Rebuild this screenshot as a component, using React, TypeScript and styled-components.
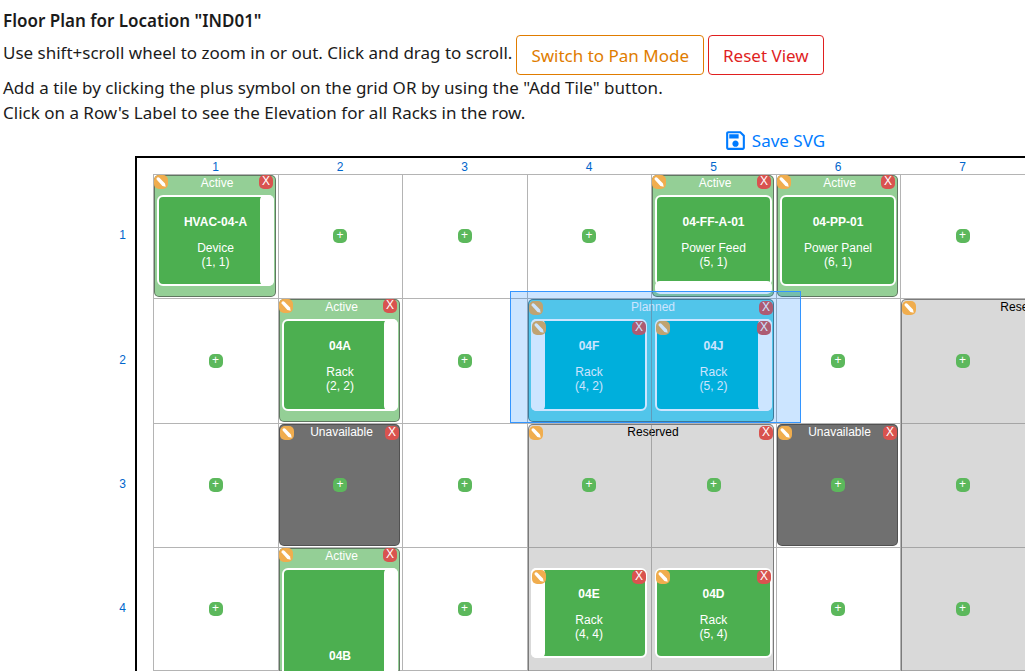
import React from "react";
import styled, { createGlobalStyle, css } from "styled-components";

const GlobalStyle = createGlobalStyle`
  *, *::before, *::after { box-sizing: border-box; }
  body {
    margin: 0;
    background: #fff;
    color: #1b1b1b;
    font: 17px/25px "Noto Sans", sans-serif;
  }
`;

const planFont = css`
  font: 12px/14px "Liberation Sans", Arial, sans-serif;
`;

const Page = styled.main`
  display: flex;
  flex-direction: column;
  height: 100vh;
  overflow: hidden;
`;

const Intro = styled.header`
  padding: 8px 3px 0;
  white-space: nowrap;
`;

const Title = styled.h1`
  margin: 0;
  font-size: 17px;
  line-height: 25px;
  font-weight: 600;
`;

const ModeRow = styled.div`
  display: flex;
  align-items: center;
  gap: 4px;
  padding-top: 2px;
`;

const Text = styled.p`
  margin: 0;
`;

const ModeHint = styled(Text)`
  padding-bottom: 5px;
`;

const OutlineButton = styled.button<{ $color: string }>`
  height: 40px;
  padding: 0 14px;
  border: 1px solid ${(p) => p.$color};
  border-radius: 4px;
  background: #fff;
  color: ${(p) => p.$color};
  font: inherit;
  cursor: pointer;
`;

const Canvas = styled.section`
  width: 1548px;
  flex: 1;
  display: flex;
  flex-direction: column;
`;

const SaveLink = styled.a`
  display: flex;
  align-self: center;
  align-items: center;
  gap: 4px;
  margin: 3px 0;
  color: #007bff;
  text-decoration: none;
`;

const Plan = styled.div`
  display: flex;
  flex: 1;
  ${planFont}
`;

const rows = "124px 125px 124px 123px 124px";
const columns = "repeat(4, 125px 124px)";

const RowLabels = styled.nav`
  display: grid;
  grid-template-rows: ${rows};
  width: 135px;
  padding: 17px 9px 0 0;
  justify-content: end;
  align-items: center;
`;

const Board = styled.div`
  flex: 1;
  padding-left: 16px;
  border: solid #000;
  border-width: 2px 0 0 2px;
`;

const ColumnLabels = styled.nav`
  display: grid;
  grid-template-columns: ${columns};
  justify-items: center;
  height: 16px;
  padding-top: 2px;
`;

const AxisLink = styled.a`
  color: #0066cc;
  text-decoration: none;
`;

const Grid = styled.div`
  position: relative;
  display: grid;
  grid-template-columns: ${columns};
  grid-template-rows: ${rows};
`;

type Span = { $c: number; $r: number; $w?: number; $h?: number };

const area = css<Span>`
  grid-column: ${(p) => p.$c} / span ${(p) => p.$w ?? 1};
  grid-row: ${(p) => p.$r} / span ${(p) => p.$h ?? 1};
`;

const Cell = styled.div<Span>`
  ${area}
  display: flex;
  align-items: center;
  justify-content: center;
  padding: 0 1px 1px 0;
  border: solid rgba(130, 130, 130, 0.6);
  border-width: 1px 0 0 1px;
`;

const Status = styled.div<Span & { $bg: string; $fg: string }>`
  ${area}
  margin: 1px 2px 1px 1px;
  padding-left: 4px;
  border: 1px solid rgba(60, 60, 60, 0.6);
  border-radius: 5px;
  background: ${(p) => p.$bg};
  color: ${(p) => p.$fg};
  text-align: center;
`;

const TileControls = styled.div<Span>`
  ${area}
  position: relative;
  align-self: start;
  height: 20px;
`;

const Item = styled.div<Span & { $bg: string }>`
  ${area}
  position: relative;
  display: flex;
  flex-direction: column;
  align-items: center;
  justify-content: center;
  margin: 21px 4px 12px;
  padding-top: 2px;
  border: 2px solid #fff;
  border-radius: 6px;
  background: ${(p) => p.$bg};
  color: #fff;
`;

const ItemName = styled.strong`
  margin-bottom: 12px;
`;

const Facing = styled.span<{ $side: Side }>`
  position: absolute;
  border-radius: 5px;
  background: #fff;
  ${(p) =>
    p.$side === "down"
      ? "left: -2px; right: -2px; bottom: -10px; height: 13px;"
      : `top: -2px; bottom: -2px; width: 14px; ${p.$side}: -2px;`}
`;

const badge = css`
  display: flex;
  align-items: flex-start;
  justify-content: center;
  width: 14px;
  height: 14px;
  padding: 0;
  border: 0;
  border-radius: 5px;
  color: #fff;
  font: 12px/12px "Liberation Sans", Arial, sans-serif;
  cursor: pointer;
`;

const AddButton = styled.button`
  ${badge}
  background: #5cb85c;
`;

const EditButton = styled.button<{ $x: number; $y: number }>`
  ${badge}
  position: absolute;
  left: ${(p) => p.$x}px;
  top: ${(p) => p.$y}px;
  background: #f0ad4e;
`;

const DeleteButton = styled.button<{ $x: number; $y: number }>`
  ${badge}
  position: absolute;
  right: ${(p) => p.$x}px;
  top: ${(p) => p.$y}px;
  background: #d9534f;
`;

const Selection = styled.div`
  position: absolute;
  left: 357px;
  top: 117px;
  width: 291px;
  height: 132px;
  border: 1px solid #3395ff;
  background: rgba(0, 123, 255, 0.2);
  pointer-events: none;
`;

type Side = "left" | "right" | "down";

const kinds = {
  Active: { bg: "#94cf96", fg: "#fff" },
  Planned: { bg: "#66d7e5", fg: "#fff" },
  Reserved: { bg: "#d9d9d9", fg: "#000" },
  Unavailable: { bg: "#707070", fg: "#fff" },
};

type Kind = keyof typeof kinds;

const statuses: { kind: Kind; c: number; r: number; w?: number; h?: number }[] = [
  { kind: "Active", c: 1, r: 1 },
  { kind: "Active", c: 5, r: 1 },
  { kind: "Active", c: 6, r: 1 },
  { kind: "Active", c: 2, r: 2 },
  { kind: "Planned", c: 4, r: 2, w: 2 },
  { kind: "Reserved", c: 7, r: 2, w: 2, h: 4 },
  { kind: "Unavailable", c: 2, r: 3 },
  { kind: "Reserved", c: 4, r: 3, w: 2, h: 3 },
  { kind: "Unavailable", c: 6, r: 3 },
  { kind: "Active", c: 2, r: 4, h: 2 },
];

type ItemData = {
  name: string;
  type: string;
  c: number;
  r: number;
  h?: number;
  side?: Side;
  grouped?: boolean;
  planned?: boolean;
};

const items: ItemData[] = [
  { name: "HVAC-04-A", type: "Device", c: 1, r: 1, side: "right" },
  { name: "04-FF-A-01", type: "Power Feed", c: 5, r: 1, side: "down" },
  { name: "04-PP-01", type: "Power Panel", c: 6, r: 1 },
  { name: "04A", type: "Rack", c: 2, r: 2, side: "right" },
  { name: "04F", type: "Rack", c: 4, r: 2, side: "left", grouped: true, planned: true },
  { name: "04J", type: "Rack", c: 5, r: 2, side: "right", grouped: true, planned: true },
  { name: "04B", type: "Rack", c: 2, r: 4, h: 2, side: "right" },
  { name: "04E", type: "Rack", c: 4, r: 4, side: "left", grouped: true },
  { name: "04D", type: "Rack", c: 5, r: 4, grouped: true },
];

// Labelled, editable part of the floor; the ruled lines run one cell further.
const columnNumbers = [1, 2, 3, 4, 5, 6, 7];
const rowNumbers = [1, 2, 3, 4];
const ruledColumns = [...columnNumbers, 8];
const ruledRows = [...rowNumbers, 5];

const canAdd = (c: number, r: number) =>
  columnNumbers.includes(c) &&
  rowNumbers.includes(r) &&
  !items.some((i) => i.c === c && r >= i.r && r < i.r + (i.h ?? 1));

const Pencil = () => (
  <svg width="14" height="14" viewBox="0 0 14 14" fill="#fff" aria-hidden="true">
    <path d="M2.6 4.6 Q2.2 3.2 3.2 2.6 Q4.6 2 5.4 2.8 L11 8.4 L11.7 11.7 L8.4 11 Z" />
  </svg>
);

const SaveIcon = () => (
  <svg width="25" height="25" viewBox="0 0 24 24" fill="currentColor" aria-hidden="true">
    <path d="M17 3H5C3.89 3 3 3.9 3 5V19C3 20.1 3.89 21 5 21H19C20.1 21 21 20.1 21 19V7L17 3M19 19H5V5H16.17L19 7.83V19M12 12C10.34 12 9 13.34 9 15S10.34 18 12 18 15 16.66 15 15 13.66 12 12 12M6 6H15V10H6V6Z" />
  </svg>
);

export default function App() {
  return (
    <Page>
      <GlobalStyle />
      <Intro>
        <Title>Floor Plan for Location "IND01"</Title>
        <ModeRow>
          <ModeHint>Use shift+scroll wheel to zoom in or out. Click and drag to scroll.</ModeHint>
          <OutlineButton $color="#e07c00">Switch to Pan Mode</OutlineButton>
          <OutlineButton $color="#e01f1f">Reset View</OutlineButton>
        </ModeRow>
        <Text>Add a tile by clicking the plus symbol on the grid OR by using the "Add Tile" button.</Text>
        <Text>Click on a Row's Label to see the Elevation for all Racks in the row.</Text>
      </Intro>
      <Canvas>
        <SaveLink href="#save">
          <SaveIcon />
          Save SVG
        </SaveLink>
        <Plan>
          <RowLabels>
            {rowNumbers.map((r) => (
              <AxisLink key={r} href={`#row-${r}`}>{r}</AxisLink>
            ))}
          </RowLabels>
          <Board>
            <ColumnLabels>
              {columnNumbers.map((c) => (
                <AxisLink key={c} href={`#column-${c}`}>{c}</AxisLink>
              ))}
            </ColumnLabels>
            <Grid>
              {statuses.map((s) => (
                <Status
                  key={`${s.c}-${s.r}`}
                  $c={s.c} $r={s.r} $w={s.w} $h={s.h}
                  $bg={kinds[s.kind].bg} $fg={kinds[s.kind].fg}
                >
                  {s.kind}
                </Status>
              ))}
              {ruledRows.flatMap((r) =>
                ruledColumns.map((c) => (
                  <Cell key={`${c}-${r}`} $c={c} $r={r}>
                    {canAdd(c, r) && <AddButton aria-label={`Add tile at ${c}, ${r}`}>+</AddButton>}
                  </Cell>
                ))
              )}
              {items.map((i) => {
                const top = i.grouped ? 0 : -22;
                return (
                  <Item key={i.name} $c={i.c} $r={i.r} $h={i.h} $bg={i.planned ? "#00bcd4" : "#4caf50"}>
                    {i.side && <Facing $side={i.side} />}
                    <ItemName>{i.name}</ItemName>
                    <span>{i.type}</span>
                    <span>({i.c}, {i.r})</span>
                    <EditButton $x={i.grouped ? -1 : -5} $y={top} aria-label={`Edit ${i.name}`}>
                      <Pencil />
                    </EditButton>
                    <DeleteButton $x={-1} $y={top} aria-label={`Remove ${i.name}`}>X</DeleteButton>
                  </Item>
                );
              })}
              {statuses.filter((s) => s.kind !== "Active").map((s) => (
                <TileControls key={`${s.c}-${s.r}`} $c={s.c} $r={s.r} $w={s.w} $h={s.h}>
                  <EditButton $x={2} $y={3} aria-label={`Edit ${s.kind} tile`}><Pencil /></EditButton>
                  {s.c + (s.w ?? 1) <= 8 && (
                    <DeleteButton $x={3} $y={3} aria-label={`Remove ${s.kind} tile`}>X</DeleteButton>
                  )}
                </TileControls>
              ))}
              <Selection />
            </Grid>
          </Board>
        </Plan>
      </Canvas>
    </Page>
  );
}
